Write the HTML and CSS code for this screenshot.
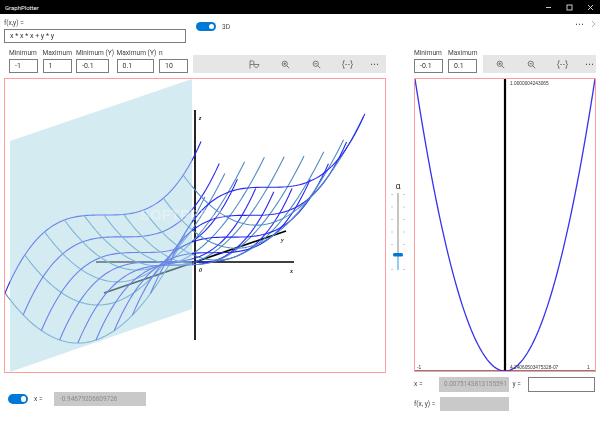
FILE: index.html
```html
<!DOCTYPE html>
<html lang="en">
<head>
<meta charset="utf-8">
<title>GraphPlotter</title>
<link rel="stylesheet" href="styles.css">
</head>
<body>
<div class="app">
  <header class="titlebar">
    <span class="app-title">GraphPlotter</span>
    <div class="win-controls">
      <svg class="win-icon" viewBox="0 0 7 7"><path d="M1 3.5H6" /></svg>
      <svg class="win-icon" viewBox="0 0 7 7"><rect x="1" y="1" width="5" height="5" /></svg>
      <svg class="win-icon" viewBox="0 0 7 7"><path d="M1 1L6 6M6 1L1 6" /></svg>
    </div>
  </header>
  <main class="workspace">
    <section class="left-pane">
      <div class="formula-row">
        <div class="formula">
          <div class="label formula-label">f(x,y) =</div>
          <div class="field formula-field">x * x * x + y * y</div>
        </div>
        <div class="toggle-3d">
          <span class="toggle"></span>
          <span class="label">3D</span>
        </div>
      </div>
      <div class="params params-left">
        <div class="param w29"><div class="label">Minimum</div><div class="field">-1</div></div>
        <div class="param w29"><div class="label">Maximum</div><div class="field">1</div></div>
        <div class="param w33"><div class="label">Minimum (Y)</div><div class="field">-0.1</div></div>
        <div class="param w37"><div class="label">Maximum (Y)</div><div class="field">0.1</div></div>
        <div class="param w29"><div class="label">n</div><div class="field">10</div></div>
        <div class="toolbar">
          <button class="tool"><svg class="icon icon-curve" viewBox="0 0 12 10"><path d="M1 9.500V1H4C6 1 6 5 4 5H1M5 5H11C10.500 7 9 8.500 8 8.500C7 8.500 5.500 7 5 5" /></svg></button>
          <button class="tool"><svg class="icon" viewBox="0 0 12 12"><circle cx="5" cy="5" r="3.500" /><path d="M7.500 7.500L11 11M3.300 5H6.700M5 3.300V6.700" /></svg></button>
          <button class="tool"><svg class="icon" viewBox="0 0 12 12"><circle cx="5" cy="5" r="3.500" /><path d="M7.500 7.500L11 11M3.300 5H6.700" /></svg></button>
          <button class="tool"><svg class="icon icon-fit" viewBox="0 0 14 10"><path d="M4 1H2.500V4L1 5L2.500 6V9H4M10 1H11.500V4L13 5L11.500 6V9H10M4.500 5H6.300M7.700 5H9.500" /></svg></button>
          <button class="tool tool-more">&#8943;</button>
        </div>
      </div>
      <div class="plot plot-3d">
        <svg id="surface" viewBox="5 79 380 293" preserveAspectRatio="none">
          <path class="axis" d="M195 110V340M96 262H294M104 293L286 231" />
          <g id="surface-lines"></g>
          <polygon class="plane" points="10,141 192,79 192,309 10,372" />
          <text class="watermark" x="140" y="220">SOFTPEDIA</text>
          <text class="axis-label" x="199" y="120">z</text>
          <text class="axis-label" x="281" y="242">y</text>
          <text class="axis-label" x="290" y="273">x</text>
          <text class="axis-label" x="199" y="272">0</text>
        </svg>
      </div>
      <div class="x-row">
        <span class="toggle"></span>
        <span class="label x-label">x =</span>
        <div class="readout readout-x">-0.94679206609726</div>
      </div>
    </section>

    <aside class="slider-pane">
      <span class="alpha">&alpha;</span>
      <svg class="slider" viewBox="0 0 14 80">
        <path class="ticks" d="M0 1.500H2M12 1.500H14M0 14H2M12 14H14M0 26.500H2M12 26.500H14M0 39H2M12 39H14M0 51.500H2M12 51.500H14M0 76.500H2M12 76.500H14" />
        <path class="track" d="M7 0V61" />
        <path class="track-on" d="M7 61V77" />
        <rect class="thumb" x="2" y="60" width="10" height="3.500" rx="1.500" />
      </svg>
    </aside>

    <section class="right-pane">
      <div class="more-row">
        <span class="more-dots">&#8943;</span>
        <svg class="chevron" viewBox="0 0 5 8"><path d="M1 1L4 4L1 7" /></svg>
      </div>
      <div class="params params-right">
        <div class="param w29"><div class="label">Minimum</div><div class="field">-0.1</div></div>
        <div class="param w29"><div class="label">Maximum</div><div class="field">0.1</div></div>
        <div class="toolbar toolbar-narrow">
          <button class="tool"><svg class="icon" viewBox="0 0 12 12"><circle cx="5" cy="5" r="3.500" /><path d="M7.500 7.500L11 11M3.300 5H6.700M5 3.300V6.700" /></svg></button>
          <button class="tool"><svg class="icon" viewBox="0 0 12 12"><circle cx="5" cy="5" r="3.500" /><path d="M7.500 7.500L11 11M3.300 5H6.700" /></svg></button>
          <button class="tool"><svg class="icon icon-fit" viewBox="0 0 14 10"><path d="M4 1H2.500V4L1 5L2.500 6V9H4M10 1H11.500V4L13 5L11.500 6V9H10M4.500 5H6.300M7.700 5H9.500" /></svg></button>
          <button class="tool tool-more">&#8943;</button>
        </div>
      </div>
      <div class="plot plot-2d">
        <svg id="section" viewBox="415 79 180 292" preserveAspectRatio="none">
          <path class="axis axis-mid" d="M505 79V371" />
          <path class="axis axis-base" d="M415 371H595" />
          <path id="parabola" class="parabola" d="" />
          <text class="plot-label" x="510" y="85">1.0000004243065</text>
          <text class="plot-label" x="417" y="369">-1</text>
          <text class="plot-label" x="510" y="369">4.24060503475328-07</text>
          <text class="plot-label" x="587" y="369">1</text>
        </svg>
      </div>
      <div class="readouts">
        <span class="label">x =</span>
        <div class="readout">0.0075143813155591</div>
        <span class="label label-y">y =</span>
        <div class="field readout-input"></div>
        <span class="label">f(x, y) =</span>
        <div class="readout readout-f"></div>
      </div>
    </section>
  </main>
</div>
<script src="plot.js"></script>
</body>
</html>
```

FILE: styles.css
```css
* { box-sizing: border-box; }
html, body { margin: 0; padding: 0; }
body { width: 600px; height: 424px; overflow: hidden; background: #fff; font-family: Roboto, "Liberation Sans", sans-serif; color: #333; }
.app { display: flex; flex-direction: column; width: 600px; height: 424px; }

.titlebar { display: flex; align-items: center; justify-content: space-between; height: 14px; flex: none; background: #000; padding-left: 5px; }
.app-title { font-size: 6px; color: #fff; }
.win-controls { display: flex; gap: 14px; padding-right: 6px; }
.win-icon { width: 7px; height: 7px; display: block; fill: none; stroke: #ddd; stroke-width: 0.9; }

.workspace { display: flex; flex: 1; min-height: 0; padding-left: 4px; will-change: transform; }
.left-pane { width: 382px; flex: none; display: flex; flex-direction: column; }
.slider-pane { width: 28px; flex: none; display: flex; flex-direction: column; align-items: center; padding: 167px 4px 0 0; }
.right-pane { width: 186px; flex: none; display: flex; flex-direction: column; }

.label { font-size: 6.600px; line-height: 10px; color: #444; white-space: nowrap; }
.field { height: 14px; border: 1px solid #7d7d7d; background: #fff; font-size: 7px; line-height: 12px; padding-left: 5px; color: #333; }

.formula-row { display: flex; height: 34px; flex: none; }
.formula { width: 182px; }
.formula-label { height: 15px; padding-top: 4px; }
.toggle-3d { display: flex; align-items: center; gap: 6px; margin-left: 10px; height: 9px; margin-top: 8px; }

.toggle { display: block; width: 20px; height: 9.500px; border-radius: 5px; background: #0078d7; position: relative; flex: none; }
.toggle::after { content: ""; position: absolute; right: 2px; top: 2px; width: 5.500px; height: 5.500px; border-radius: 50%; background: #fff; }

.params { display: flex; align-items: flex-end; height: 25px; flex: none; }
.params-left { padding-left: 5px; gap: 4.500px; }
.params-right { gap: 5px; width: 182px; }
.param .label { height: 11px; line-height: 11px; }
.w29 { width: 29px; }
.w33 { width: 36px; }
.w33 .field { width: 33px; }
.w37 { width: 38px; }
.w37 .field { width: 37px; }

.toolbar { flex: 1; height: 18px; background: #e6e6e6; display: flex; justify-content: flex-end; align-items: center; margin-left: 0.500px; }
.tool { width: 31px; height: 18px; border: 0; padding: 0; background: none; display: flex; align-items: center; justify-content: center; color: #444; font-family: "DejaVu Sans", sans-serif; font-size: 9px; }
.tool-more { width: 23px; }
.toolbar-narrow .tool-more { margin-right: -5px; }
.icon { width: 9px; height: 9px; display: block; fill: none; stroke: #555; stroke-width: 1; }
.icon-curve { width: 11px; stroke-width: 0.8; }
.icon-fit { width: 13px; height: 9px; stroke-width: 0.8; }

.plot { border: 1px solid #ff9c9c; background: #fff; margin-top: 5px; flex: none; }
.plot svg { display: block; width: 100%; height: 100%; }
.plot-3d { width: 382px; height: 295px; }
.plot-2d { width: 182px; height: 294px; }

.axis { fill: none; stroke: #000; stroke-width: 1.700; }
.axis-mid { stroke-width: 2.200; }
.axis-base { stroke-width: 1; }
.plane { fill: rgba(173, 216, 230, 0.52); }
.line-x { fill: none; stroke: #2626f2; stroke-width: 1.100; }
.line-y { fill: none; stroke: #4f8cc4; stroke-width: 1.100; }
.watermark { font-family: "Liberation Sans", sans-serif; font-size: 15px; font-weight: 700; fill: rgba(255, 255, 255, 0.3); }
.axis-label { font-family: "Liberation Serif", serif; font-size: 6px; font-style: italic; font-weight: 700; fill: #111; }
.parabola { fill: none; stroke: #3434ee; stroke-width: 1.300; }
.plot-label { font-family: "Liberation Sans", sans-serif; font-size: 4.800px; fill: #333; }

.x-row { display: flex; align-items: center; margin-top: 19px; height: 14px; padding-left: 4px; }
.x-label { margin-left: 6px; width: 20px; }
.readout { height: 14.500px; background: #c9c9c9; color: #8a8a8a; font-size: 6.400px; line-height: 14px; padding-left: 6px; white-space: nowrap; overflow: hidden; }
.readout-x { width: 92px; }

.alpha { font-size: 9px; line-height: 10px; color: #333; }
.slider { display: block; width: 14px; height: 80px; margin-top: 2px; }
.ticks { stroke: #b5b5b5; stroke-width: 0.700; fill: none; }
.track { stroke: #8a8a8a; stroke-width: 1; }
.track-on { stroke: #3a96e0; stroke-width: 1; }
.thumb { fill: #0078d7; }

.more-row { height: 34px; flex: none; display: flex; align-items: center; justify-content: flex-end; gap: 7px; padding: 0 4px 14px 0; }
.more-dots { font-family: "DejaVu Sans", sans-serif; font-size: 9px; line-height: 10px; color: #444; }
.chevron { width: 5px; height: 8px; fill: none; stroke: #999; stroke-width: 0.800; }

.readouts { display: grid; grid-template-columns: 25px 69.500px 19px 67.500px; row-gap: 5px; align-items: center; margin-top: 5px; }
.readouts .readout { padding-left: 5px; }
.label-y { padding-left: 4px; }
.readout-input { height: 14.500px; }
.readout-f { margin-left: 1px; }
```

FILE: plot.js
```js
(function () {
  var NS = "http://www.w3.org/2000/svg";
  var group = document.getElementById("surface-lines");

  function project(sx, sy) {
    return [
      195 + 99 * sx + 91 * sy,
      262 - 31 * sy - 78 * (sx * sx * sx + sy * sy)
    ];
  }

  function addLine(cls, fn) {
    var d = "";
    for (var k = 0; k <= 60; k++) {
      var t = -1 + (1.98 * k) / 60;
      var p = fn(t);
      d += (k ? "L" : "M") + p[0].toFixed(2) + " " + p[1].toFixed(2);
    }
    var el = document.createElementNS(NS, "path");
    el.setAttribute("class", cls);
    el.setAttribute("d", d);
    group.appendChild(el);
  }

  for (var i = 0; i < 10; i++) {
    (function (s) {
      addLine("line-y", function (t) { return project(s, t); });
      addLine("line-x", function (t) { return project(t, s); });
    })(-1 + 0.2 * i);
  }

  var d = "";
  for (var k = 0; k <= 80; k++) {
    var s = -1 + k / 40;
    d += (k ? "L" : "M") + (505 + 90 * s).toFixed(2) + " " + (371 - 292 * s * s).toFixed(2);
  }
  document.getElementById("parabola").setAttribute("d", d);
})();
```
